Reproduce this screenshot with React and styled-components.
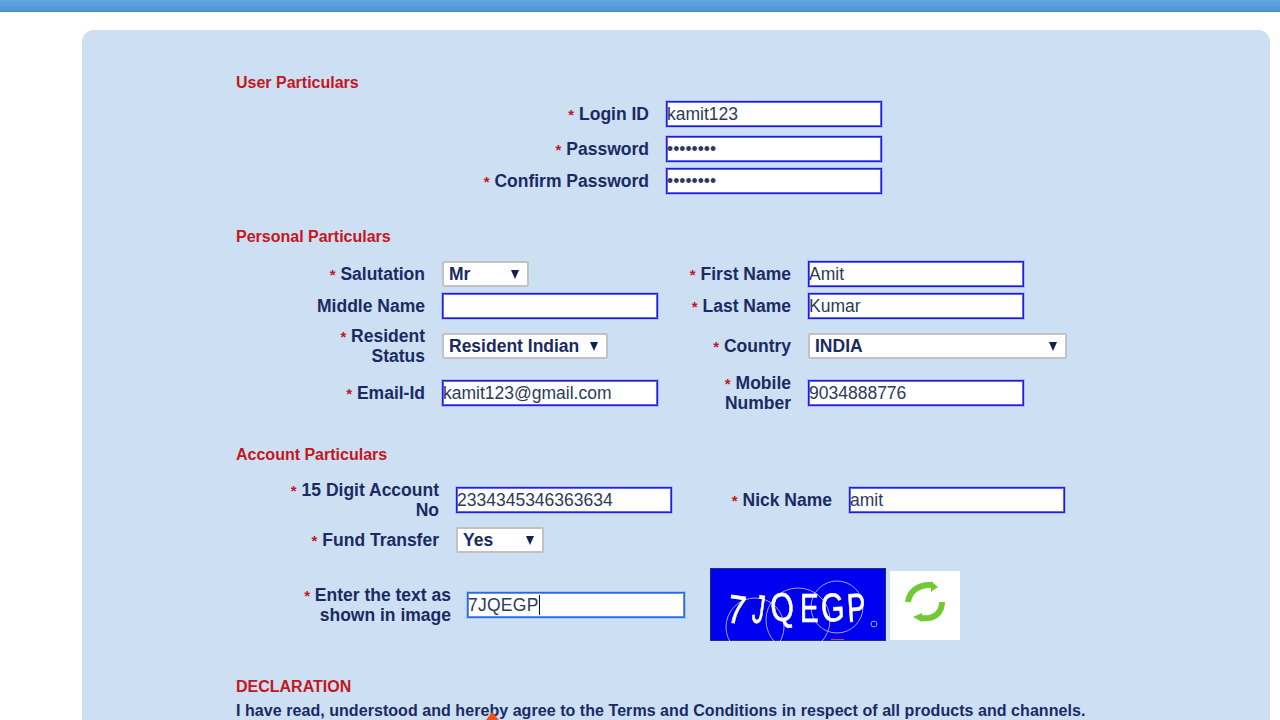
import React from 'react';
import styled, { createGlobalStyle } from 'styled-components';

const GlobalStyle = createGlobalStyle`
  html, body {
    margin: 0;
    padding: 0;
    height: 720px;
    overflow: hidden;
    background: #fff;
    font-family: "Liberation Sans", Arial, sans-serif;
  }
`;

const TopBar = styled.div`
  height: 11px;
  background: linear-gradient(#5fa6e0, #4b96d4);
  border-bottom: 1px solid #3f8ccb;
`;

const Page = styled.div`
  padding: 18px 10px 0 82px;
`;

const Card = styled.div`
  background: #cddff3;
  border-radius: 12px 12px 0 0;
  padding: 43px 0 60px 154px;
`;

const SectionTitle = styled.h3`
  margin: 0;
  font-size: 16px;
  line-height: 20px;
  font-weight: bold;
  color: #c4161c;
`;

const Section = styled.section`
  margin-top: ${(p) => p.$top || 0}px;
`;

const FormGrid = styled.div`
  display: grid;
  grid-template-columns: ${(p) => p.$columns};
  grid-template-rows: ${(p) => p.$rows || 'auto'};
  column-gap: 17px;
  row-gap: 6px;
  align-items: ${(p) => p.$align || 'center'};
  margin-top: ${(p) => p.$top}px;
`;

const Label = styled.label`
  text-align: right;
  font-size: 17.5px;
  line-height: ${(p) => p.$line || 20}px;
  font-weight: bold;
  color: #1b2a63;
`;

const Star = styled.span`
  color: #c4161c;
  font-size: 15px;
  line-height: 0;
`;

const TextInput = styled.input`
  box-sizing: border-box;
  width: 216px;
  height: 26px;
  padding: 0;
  border: 1px solid #1c1ce8;
  box-shadow: inset 0 0 0 1px rgba(50, 50, 230, 0.75), 0 0 0 1px rgba(50, 50, 230, 0.2);
  border-radius: 0;
  outline: none;
  background: #fff;
  font-family: "Liberation Sans", Arial, sans-serif;
  font-size: 17.5px;
  color: #2c3a5c;
`;

const SelectBox = styled.div`
  box-sizing: border-box;
  display: flex;
  align-items: center;
  justify-content: space-between;
  width: ${(p) => p.$width}px;
  height: 26px;
  padding: 0 8px 0 5px;
  background: #fff;
  border: 2px solid #c2c2c2;
  border-radius: 2px;
  font-size: 17.5px;
  font-weight: bold;
  color: #1b2a63;
`;

const Arrow = styled.span`
  width: 0;
  height: 0;
  border-left: 4.5px solid transparent;
  border-right: 4.5px solid transparent;
  border-top: 9px solid #14204f;
`;

const CaptchaRow = styled.div`
  display: flex;
  align-items: center;
  margin-top: 15px;
`;

const CaptchaLabel = styled(Label)`
  width: 215px;
  margin-right: 16px;
`;

const CaptchaField = styled.div`
  box-sizing: border-box;
  display: flex;
  align-items: center;
  width: 218px;
  height: 26px;
  margin: 1px 25px 0 0;
  border: 1px solid #2468ee;
  box-shadow: inset 0 0 0 1px rgba(40, 110, 235, 0.75), 0 0 0 1px rgba(40, 110, 235, 0.2);
  background: #fff;
  font-size: 17.5px;
  letter-spacing: 0.25px;
  color: #2c3a5c;
`;

const Caret = styled.span`
  width: 1px;
  height: 20px;
  background: #111;
`;

const CaptchaImage = styled.svg`
  display: block;
  width: 176px;
  height: 73px;
  margin-right: 4px;
  filter: blur(0.35px);
`;

const RefreshBox = styled.div`
  width: 70px;
  height: 69px;
  margin-top: 2px;
  background: #fff;

  svg {
    display: block;
    filter: blur(0.6px);
  }
`;

const DeclarationText = styled.p`
  margin: 4px 0 0;
  font-size: 16px;
  line-height: 20px;
  font-weight: bold;
  letter-spacing: 0.055px;
  white-space: nowrap;
  color: #1b2a63;
`;

const Pointer = styled.svg`
  position: absolute;
  left: 485px;
  top: 712px;
  width: 14px;
  height: 8px;
`;

const Req = ({ children, line }) => (
  <Label $line={line}>
    <Star>*</Star> {children}
  </Label>
);

const Select = ({ width, value }) => (
  <SelectBox $width={width}>
    {value}
    <Arrow />
  </SelectBox>
);

const Field = ({ value, type = 'text' }) => (
  <TextInput type={type} value={value} readOnly />
);

// letter, x, horizontal squeeze, tilt
const captchaLetters = [
  ['7', 16, 0.8, 8],
  ['J', 41, 0.6, 8],
  ['Q', 62, 0.75, -6],
  ['E', 90, 0.7, 0],
  ['G', 112, 0.75, -4],
  ['P', 138, 0.7, -4],
];

const Captcha = () => (
  <CaptchaImage viewBox="0 0 176 73">
    <rect x="0.5" y="0.5" width="175" height="72" fill="#0000f0" stroke="#23306f" />
    <g fill="none" stroke="#a4a4f4" strokeWidth="1">
      <circle cx="127" cy="39" r="26" />
      <circle cx="88" cy="52" r="32" />
      <circle cx="45" cy="59" r="29" />
      <circle cx="164" cy="56" r="3" />
    </g>
    <rect x="121" y="71" width="13" height="1" fill="#b0506a" />
    <g
      fill="#fff"
      stroke="#fff"
      strokeWidth="0.7"
      fontFamily="Liberation Sans, Arial, sans-serif"
      fontSize="40"
    >
      {captchaLetters.map(([ch, x, sx, rot]) => (
        <text key={x} transform={`translate(${x} 54) rotate(${rot}) scale(${sx} 1)`}>
          {ch}
        </text>
      ))}
    </g>
  </CaptchaImage>
);

const RefreshIcon = () => (
  <svg width="70" height="69" viewBox="0 0 70 69">
    <g fill="none" stroke="#72c934" strokeWidth="6">
      <path d="M18 31 C19 21 28 13 42 14" />
      <path d="M52 31 C52 41 45 49 31 47" />
    </g>
    <path d="M41 10 L48 16 L41 21 Z" fill="#72c934" />
    <path d="M32 42 L23 46 L32 51 Z" fill="#72c934" />
  </svg>
);

export default function App() {
  return (
    <>
      <GlobalStyle />
      <TopBar />
      <Page>
        <Card>
          <Section>
            <SectionTitle>User Particulars</SectionTitle>
            <FormGrid $columns="413px 216px" $rows="29px 26px 26px" $align="start" $top={8}>
              <Req line={26}>Login ID</Req>
              <Field value="kamit123" />
              <Req line={26}>Password</Req>
              <Field type="password" value="kamit123" />
              <Req line={26}>Confirm Password</Req>
              <Field type="password" value="kamit123" />
            </FormGrid>
          </Section>

          <Section $top={33}>
            <SectionTitle>Personal Particulars</SectionTitle>
            <FormGrid $columns="189px 216px 116px 260px" $rows="26px 26px 42px 40px" $top={14}>
              <Req>Salutation</Req>
              <Select width={87} value="Mr" />
              <Req>First Name</Req>
              <Field value="Amit" />

              <Label>Middle Name</Label>
              <Field value="" />
              <Req>Last Name</Req>
              <Field value="Kumar" />

              <Req>Resident<br />Status</Req>
              <Select width={166} value="Resident Indian" />
              <Req>Country</Req>
              <Select width={259} value="INDIA" />

              <Req>Email-Id</Req>
              <Field value="kamit123@gmail.com" />
              <Req>Mobile<br />Number</Req>
              <Field value="9034888776" />
            </FormGrid>
          </Section>

          <Section $top={32}>
            <SectionTitle>Account Particulars</SectionTitle>
            <FormGrid $columns="203px 216px 143px 216px" $rows="42px 26px" $top={14}>
              <Req>15 Digit Account<br />No</Req>
              <Field value="2334345346363634" />
              <Req>Nick Name</Req>
              <Field value="amit" />

              <Req>Fund Transfer</Req>
              <Select width={88} value="Yes" />
            </FormGrid>

            <CaptchaRow>
              <CaptchaLabel>
                <Star>*</Star> Enter the text as<br />shown in image
              </CaptchaLabel>
              <CaptchaField>
                7JQEGP
                <Caret />
              </CaptchaField>
              <Captcha />
              <RefreshBox>
                <RefreshIcon />
              </RefreshBox>
            </CaptchaRow>
          </Section>

          <Section $top={36}>
            <SectionTitle>DECLARATION</SectionTitle>
            <DeclarationText>
              I have read, understood and hereby agree to the Terms and Conditions in respect of all products and channels.
            </DeclarationText>
          </Section>
        </Card>
      </Page>
      <Pointer viewBox="0 0 14 8">
        <path d="M7 0 L14 8 L1 8 Z" fill="#f0501e" />
      </Pointer>
    </>
  );
}
